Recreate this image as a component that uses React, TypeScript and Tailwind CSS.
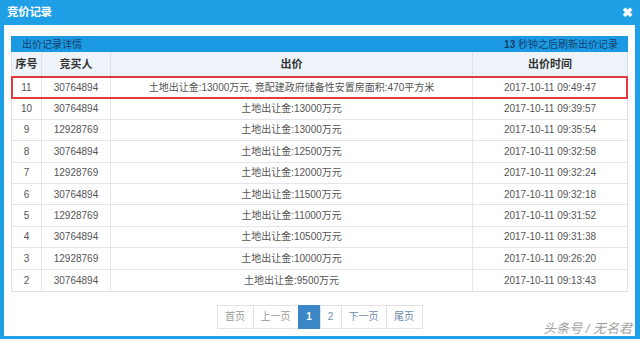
import React from "react";

const rows = [
  { no: "11", bidder: "30764894", price: "土地出让金:13000万元, 竞配建政府储备性安置房面积:470平方米", time: "2017-10-11 09:49:47", hl: true },
  { no: "10", bidder: "30764894", price: "土地出让金:13000万元", time: "2017-10-11 09:39:57" },
  { no: "9", bidder: "12928769", price: "土地出让金:13000万元", time: "2017-10-11 09:35:54" },
  { no: "8", bidder: "30764894", price: "土地出让金:12500万元", time: "2017-10-11 09:32:58" },
  { no: "7", bidder: "12928769", price: "土地出让金:12000万元", time: "2017-10-11 09:32:24" },
  { no: "6", bidder: "30764894", price: "土地出让金:11500万元", time: "2017-10-11 09:32:18" },
  { no: "5", bidder: "12928769", price: "土地出让金:11000万元", time: "2017-10-11 09:31:52" },
  { no: "4", bidder: "30764894", price: "土地出让金:10500万元", time: "2017-10-11 09:31:38" },
  { no: "3", bidder: "12928769", price: "土地出让金:10000万元", time: "2017-10-11 09:26:20" },
  { no: "2", bidder: "30764894", price: "土地出让金:9500万元", time: "2017-10-11 09:13:43" },
];

const font = { fontFamily: '"Liberation Sans", Arial, "Noto Sans CJK SC", sans-serif' };

export default function App() {
  return (
    <div className="relative w-[640px] h-[341px] bg-[#f3f5f7] overflow-hidden" style={font}>
      <div className="flex flex-col w-[640px] h-[339px] bg-[#1f9fe6] pl-[4px] pr-[5px] pb-[3px]">
        {/* title bar */}
        <div className="flex items-center justify-between h-[25px] shrink-0 pl-[3px] pr-[2px]">
          <span className="text-white font-bold text-[11.5px] tracking-[-0.3px]">竞价记录</span>
          <span className="text-white font-bold text-[13px] leading-none">✖</span>
        </div>
        {/* body */}
        <div className="flex-1 bg-white px-[7px] pt-[11px] flex flex-col">
          <div className="flex items-center justify-between h-[16px] bg-[#1b9ae3] pl-[11px] pr-[10px] text-[10px] text-[#163f6c]">
            <span>出价记录详情</span>
            <span><b>13</b> 秒钟之后刷新出价记录</span>
          </div>
          {/* table */}
          <div className="border-l border-r border-b border-[#d9e2eb] text-[10px] text-[#555]">
            <div className="grid grid-cols-[30px_69px_1fr_154px] h-[25px] bg-[#edf3f9] font-bold text-[11px] text-[#333] border-b border-[#d9e2eb]">
              <div className="flex items-center justify-center border-r border-[#d9e2eb]">序号</div>
              <div className="flex items-center justify-center border-r border-[#d9e2eb]">竞买人</div>
              <div className="flex items-center justify-center border-r border-[#d9e2eb]">出价</div>
              <div className="flex items-center justify-center">出价时间</div>
            </div>
            {rows.map((r, i) => (
              <div
                key={r.no}
                className={
                  "grid grid-cols-[30px_69px_1fr_154px] h-[21.4px] " +
                  (i < rows.length - 1 ? "border-b border-[#dfe6ee] " : "") +
                  (r.hl ? "outline-2 outline-solid outline-[#e03c40] -outline-offset-1 relative" : "")
                }
              >
                <div className="flex items-center justify-center border-r border-[#dfe6ee]">{r.no}</div>
                <div className="flex items-center justify-center border-r border-[#dfe6ee]">{r.bidder}</div>
                <div className="flex items-center justify-center border-r border-[#dfe6ee] whitespace-nowrap">{r.price}</div>
                <div className="flex items-center justify-center">{r.time}</div>
              </div>
            ))}
          </div>
          {/* pagination */}
          <div className="flex justify-center mt-[13px] text-[10px]">
            <div className="flex h-[24px]">
              <span className="flex items-center justify-center w-[37px] border border-[#e3e3e3] text-[#9a9a9a]">首页</span>
              <span className="flex items-center justify-center w-[46px] -ml-px border border-[#e3e3e3] text-[#9a9a9a]">上一页</span>
              <span className="flex items-center justify-center w-[23px] -ml-px bg-[#3b86c6] border border-[#3b86c6] text-white font-bold">1</span>
              <span className="flex items-center justify-center w-[22px] -ml-px border border-[#e3e3e3] text-[#6d8cb0]">2</span>
              <span className="flex items-center justify-center w-[46px] -ml-px border border-[#e3e3e3] text-[#6d8cb0]">下一页</span>
              <span className="flex items-center justify-center w-[37px] -ml-px border border-[#e3e3e3] text-[#6d8cb0]">尾页</span>
            </div>
          </div>
        </div>
      </div>
      <span className="absolute right-[8px] top-[322px] text-[13px] italic text-[#8a8a8a] opacity-80 leading-none">头条号 / 无名君</span>
    </div>
  );
}
